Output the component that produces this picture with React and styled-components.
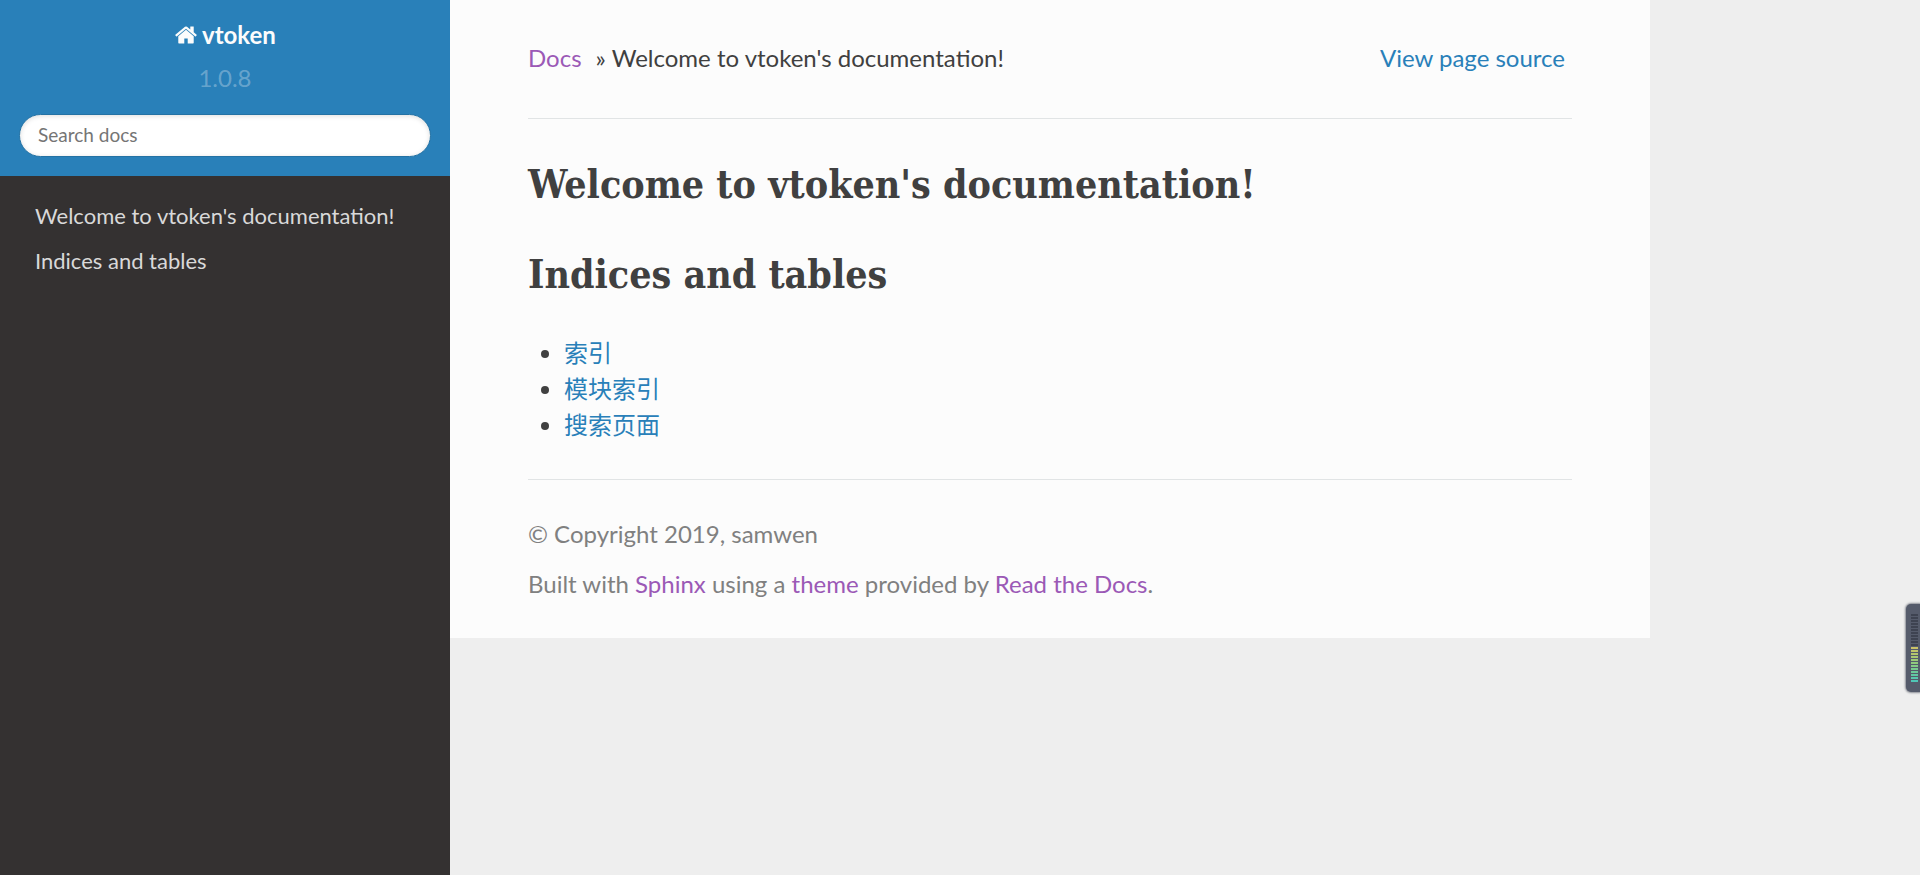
import React from 'react';
import styled, { createGlobalStyle } from 'styled-components';

const GlobalStyle = createGlobalStyle`
  *, *::before, *::after { box-sizing: border-box; }
  html { background: #eeeeee; }
  body {
    margin: 0;
    color: #404040;
    font-family: Lato, "Noto Sans CJK SC", "Liberation Sans", sans-serif;
    font-size: 24px;
    line-height: 36px;
  }
`;

const Page = styled.div`
  display: flex;
  align-items: flex-start;
  min-height: 100vh;
`;

const Sidebar = styled.nav`
  flex: 0 0 450px;
  align-self: stretch;
  background: #343131;
`;

const SidebarHeader = styled.header`
  display: flex;
  flex-direction: column;
  align-items: center;
  padding: 19px;
  background: #2980b9;
`;

const HomeLink = styled.a`
  display: flex;
  align-items: center;
  gap: 4px;
  height: 32px;
  color: #fcfcfc;
  font-weight: 700;
  text-decoration: none;
`;

const HomeGlyph = styled.svg`
  width: 24px;
  height: 24px;
  fill: currentColor;
`;

const Version = styled.div`
  margin: 9px 0 18px;
  color: rgba(255, 255, 255, 0.3);
`;

const SearchForm = styled.form`
  width: 100%;
`;

const SearchInput = styled.input`
  display: block;
  width: 100%;
  height: 43px;
  padding: 0 18px 3px;
  border: 1px solid #2472a4;
  border-radius: 50px;
  background: #ffffff;
  box-shadow: inset 0 1px 5px #dddddd;
  color: #404040;
  font: inherit;
  font-size: 19px;
  &::placeholder { color: #757575; opacity: 1; }
`;

const Menu = styled.ul`
  margin: 0;
  padding: 17px 0;
  list-style: none;
`;

const MenuLink = styled.a`
  display: block;
  padding: 9px 35px;
  color: #d9d9d9;
  font-size: 22px;
  line-height: 27px;
  text-decoration: none;
`;

const Content = styled.div`
  flex: 0 1 1200px;
  min-width: 0;
  padding: 40px 78px 36px;
  background: #fcfcfc;
`;

const Breadcrumbs = styled.div`
  display: flex;
  justify-content: space-between;
  padding: 0 7px 6px 0;
`;

const Trail = styled.div`
  display: flex;
  gap: 14px;
`;

const Link = styled.a`
  color: ${(p) => (p.$visited ? '#9b59b6' : '#2980b9')};
  text-decoration: none;
`;

const Rule = styled.hr`
  height: 1px;
  margin: 36px 0;
  border: 0;
  background: #e1e4e5;
`;

const Heading = styled.h1`
  margin: 0 0 32px;
  font-family: "Roboto Slab", "DejaVu Serif Condensed", "DejaVu Serif", serif;
  font-size: 39px;
  font-weight: 700;
  line-height: 58px;
`;

const LinkList = styled.ul`
  margin: 0;
  padding: 0 0 0 36px;
`;

const Footer = styled.footer`
  color: #808080;
  p { margin: 0 0 14px; }
  p:last-child { margin: 0; }
`;

const Meter = styled.aside`
  position: fixed;
  right: 0;
  top: 604px;
  display: flex;
  flex-direction: column;
  gap: 1px;
  width: 14px;
  padding: 10px 2px 10px 5px;
  border-radius: 5px 0 0 5px;
  background: #555b6b;
  box-shadow: 0 0 2px 1px #8b8e96;
`;

const Tick = styled.span`
  height: 2px;
  background: ${(p) => p.$color};
`;

const meterColors = [
  ...Array(11).fill('#3e4351'),
  '#c9c267', '#bfc569', '#b3c76d', '#a8c872', '#9cc978', '#90ca7e',
  '#84ca86', '#78ca8f', '#6cc999', '#61c8a3', '#58c7ad', '#50c6b6',
];

export default function App() {
  return (
    <>
      <GlobalStyle />
      <Page>
        <Sidebar>
          <SidebarHeader>
            <HomeLink href="#">
              <HomeGlyph viewBox="0 0 1792 1792" aria-hidden="true">
                <path d="M1472 992v480q0 26-19 45t-45 19h-384v-384h-256v384h-384q-26 0-45-19t-19-45v-480q0-1 .5-3t.5-3l575-474 575 474q1 2 1 6zm223-69l-62 74q-8 9-21 11h-3q-13 0-21-7l-692-577-692 577q-12 8-24 7-13-2-21-11l-62-74q-8-10-7-23.500t11-21.500l719-599q32-26 76-26t76 26l244 204v-195q0-14 9-23t23-9h192q14 0 23 9t9 23v408l219 182q10 8 11 21.500t-7 23.500z" />
              </HomeGlyph>
              vtoken
            </HomeLink>
            <Version>1.0.8</Version>
            <SearchForm role="search">
              <SearchInput type="text" placeholder="Search docs" aria-label="Search docs" />
            </SearchForm>
          </SidebarHeader>
          <Menu>
            <li><MenuLink href="#welcome">Welcome to vtoken's documentation!</MenuLink></li>
            <li><MenuLink href="#indices">Indices and tables</MenuLink></li>
          </Menu>
        </Sidebar>
        <Content>
          <Breadcrumbs>
            <Trail>
              <Link href="#" $visited>Docs</Link>
              <span>» Welcome to vtoken's documentation!</span>
            </Trail>
            <Link href="#source">View page source</Link>
          </Breadcrumbs>
          <Rule />
          <main>
            <Heading id="welcome">Welcome to vtoken's documentation!</Heading>
            <Heading id="indices">Indices and tables</Heading>
            <LinkList>
              <li><Link href="#genindex">索引</Link></li>
              <li><Link href="#modindex">模块索引</Link></li>
              <li><Link href="#search">搜索页面</Link></li>
            </LinkList>
          </main>
          <Rule />
          <Footer>
            <p>© Copyright 2019, samwen</p>
            <p>
              Built with <Link href="#sphinx" $visited>Sphinx</Link> using a{' '}
              <Link href="#theme" $visited>theme</Link> provided by{' '}
              <Link href="#rtd" $visited>Read the Docs</Link>.
            </p>
          </Footer>
        </Content>
      </Page>
      <Meter aria-hidden="true">
        {meterColors.map((color, i) => <Tick key={i} $color={color} />)}
      </Meter>
    </>
  );
}
